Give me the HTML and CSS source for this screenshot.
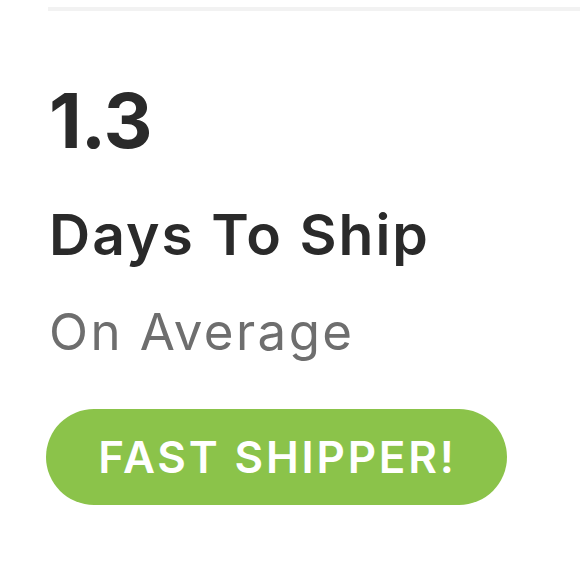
FILE: index.html
```html
<!DOCTYPE html>
<html>
<head>
<meta charset="utf-8">
<link rel="stylesheet" href="styles.css">
</head>
<body>
<div class="card">
  <div class="rule"></div>
  <div class="content">
    <div class="value">1.3</div>
    <div class="label">Days To Ship</div>
    <div class="sub">On Average</div>
    <div class="badge">FAST SHIPPER!</div>
  </div>
</div>
</body>
</html>
```
FILE: styles.css
```css
html, body {
  margin: 0;
  padding: 0;
  background: #ffffff;
}
.card {
  width: 580px;
  height: 580px;
  font-family: Inter, Lato, sans-serif;
}
.rule {
  margin: 7px 0 0 48px;
  height: 4px;
  background: #f2f2f2;
}
.content {
  display: flex;
  flex-direction: column;
  align-items: flex-start;
  padding-left: 46px;
}
.value {
  margin-top: 71px;
  font-size: 76px;
  line-height: 76px;
  font-weight: 700;
  color: #2a2a2a;
  padding-left: 3px;
  letter-spacing: -1px;
}
.label {
  margin-top: 48px;
  font-size: 57px;
  line-height: 58px;
  font-weight: 600;
  color: #2a2a2a;
  padding-left: 3px;
  letter-spacing: 2px;
}
.sub {
  margin-top: 42px;
  font-size: 51px;
  line-height: 51px;
  font-weight: 400;
  color: #6e6e6e;
  padding-left: 3px;
  letter-spacing: 2.4px;
}
.badge {
  margin-top: 52px;
  width: 461px;
  height: 96px;
  border-radius: 48px;
  background: #8bc34a;
  color: #ffffff;
  font-size: 44px;
  font-weight: 600;
  letter-spacing: 2.8px;
  display: flex;
  align-items: center;
  justify-content: center;
  padding-left: 2px;
  box-sizing: border-box;
}
```
